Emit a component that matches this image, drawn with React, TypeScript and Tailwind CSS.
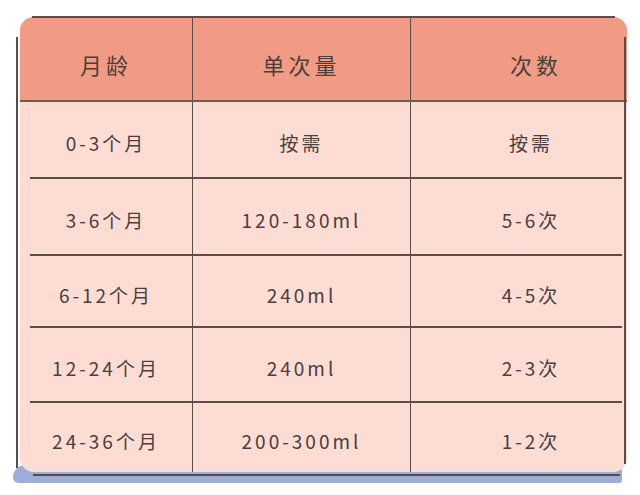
const header = ["月龄", "单次量", "次数"]

const rows = [
  { age: "0-3个月", amount: "按需", times: "按需", h: "h-[75px]" },
  { age: "3-6个月", amount: "120-180ml", times: "5-6次", h: "h-[77px]" },
  { age: "6-12个月", amount: "240ml", times: "4-5次", h: "h-[72px]" },
  { age: "12-24个月", amount: "240ml", times: "2-3次", h: "h-[75px]" },
  { age: "24-36个月", amount: "200-300ml", times: "1-2次", h: "h-[71px]" },
]

const font = { fontFamily: '"Noto Sans CJK SC", "Noto Sans", sans-serif' }

export default function App() {
  return (
    <div className="w-[640px] h-[495px] bg-white pt-[17px] pl-[20px]" style={font}>
      <div className="relative w-[607px] h-[455px]">
        {/* blue shadow and sketchy outline around the card */}
        <div className="absolute left-[-7px] right-[5px] bottom-[-11px] h-[18px] bg-[#9dadd9] rounded-tl-[22px] rounded-bl-[10px] rounded-br-[6px]" />
        <div className="absolute left-[13px] right-[7px] bottom-[-4px] h-[2px] bg-[#5a4d49] z-20" />

        <div className="relative z-10 flex flex-col w-full h-full rounded-[14px] bg-[#fddcd4] text-[#4a3f3d]">
          <div className="absolute top-[-1px] left-[12px] right-[12px] h-[2px] bg-[#5a4d49]" />
          <div className="absolute left-[-4px] top-[20px] bottom-[4px] w-[2px] bg-[#5a4d49]" />
          <div className="absolute right-[1px] top-[20px] bottom-[8px] w-[2px] bg-[#5a4d49]" />

          <div className="grid grid-cols-[172px_218px_217px] h-[85px] bg-[#f19b85] rounded-t-[14px] border-b-2 border-[#6a5955]">
            {header.map((t, i) => (
              <div
                key={t}
                className={`flex items-center justify-center pt-[12px] text-[22px] tracking-[0.18em] ${
                  i > 0 ? "border-l-[1.5px] border-[#5a4d49]" : ""
                } ${i === 2 ? "pl-[34px]" : ""}`}
              >
                {t}
              </div>
            ))}
          </div>

          {rows.map((r, idx) => (
            <div
              key={r.age}
              className={`grid grid-cols-[162px_218px_212px] ml-[10px] mr-[5px] ${r.h} ${
                idx > 0 ? "border-t-2 border-[#5a4d49]" : ""
              }`}
            >
              <div className="flex items-center justify-center pt-[8px] pr-[10px] text-[19px] tracking-[3px]">{r.age}</div>
              <div className="flex items-center justify-center pt-[8px] text-[19px] tracking-[3px] border-l-[1.5px] border-[#5a4d49]">
                {r.amount}
              </div>
              <div className="flex items-center justify-center pt-[8px] pl-[29px] text-[19px] tracking-[3px] border-l-[1.5px] border-[#5a4d49]">
                {r.times}
              </div>
            </div>
          ))}
        </div>
      </div>
    </div>
  )
}
